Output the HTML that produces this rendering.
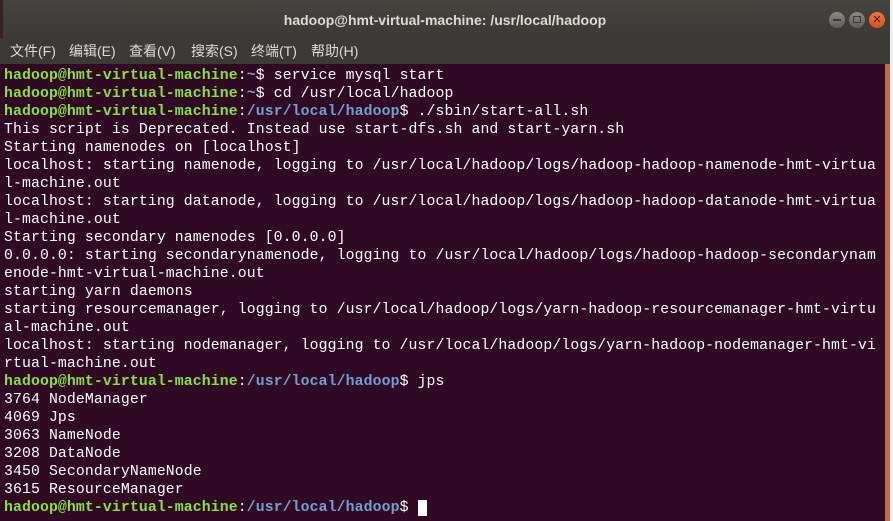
<!DOCTYPE html>
<html><head><meta charset="utf-8"><style>
body{margin:0;width:893px;height:521px;overflow:hidden;background:#f0f0f0;position:relative;font-family:"Liberation Sans","Noto Sans CJK SC",sans-serif}
#title{position:absolute;left:0;top:0;width:890px;height:38px;background:linear-gradient(#45443f,#3b3a36);color:#dfdbd2;font-weight:bold;font-size:14px;text-align:center;line-height:40px}
#menu{position:absolute;left:0;top:38px;width:890px;height:26px;background:#3b3a36;color:#dfdbd2;font-size:14px;line-height:26px}
#menu span{position:absolute;top:0}
.b{position:absolute;top:12px;width:16px;height:16px;border-radius:50%;background:linear-gradient(#8a8984,#5f5e5a)}
#term{position:absolute;left:0;top:64px;width:885px;height:457px;background:#300a24;color:#fff;font-family:"Liberation Mono",monospace;font-size:14.8px;letter-spacing:0.11px;line-height:18px;white-space:pre;padding:3px 0 0 4px;box-sizing:border-box}
.g{color:#8ae234;font-weight:bold}.u{color:#729fcf;font-weight:bold}
#sb{position:absolute;left:885px;top:64px;width:5px;height:457px;background:#d0683e}
#strip{position:absolute;left:0;top:0;width:3px;height:64px;background:#3a2020}
</style></head><body>
<div id="title">hadoop@hmt-virtual-machine: /usr/local/hadoop</div>
<div id="strip"></div>
<div class="b" style="left:829px"><div style="position:absolute;left:4px;top:7px;width:8px;height:2px;background:#3b3a36"></div></div>
<div class="b" style="left:849px"><div style="position:absolute;left:4px;top:4px;width:6px;height:5px;border:1px solid #3b3a36"></div></div>
<div class="b" style="left:869px;background:linear-gradient(#f2743f,#d9501e);color:#3a2010;font-size:11px;line-height:16px;text-align:center">✕</div>
<div id="menu"><span style="left:10px">文件(F)</span><span style="left:69px">编辑(E)</span><span style="left:129px">查看(V)</span><span style="left:191px">搜索(S)</span><span style="left:251px">终端(T)</span><span style="left:311px">帮助(H)</span></div>
<div id="term"><span class="g">hadoop@hmt-virtual-machine</span>:<span class="u">~</span>$ service mysql start
<span class="g">hadoop@hmt-virtual-machine</span>:<span class="u">~</span>$ cd /usr/local/hadoop
<span class="g">hadoop@hmt-virtual-machine</span>:<span class="u">/usr/local/hadoop</span>$ ./sbin/start-all.sh
This script is Deprecated. Instead use start-dfs.sh and start-yarn.sh
Starting namenodes on [localhost]
localhost: starting namenode, logging to /usr/local/hadoop/logs/hadoop-hadoop-namenode-hmt-virtua
l-machine.out
localhost: starting datanode, logging to /usr/local/hadoop/logs/hadoop-hadoop-datanode-hmt-virtua
l-machine.out
Starting secondary namenodes [0.0.0.0]
0.0.0.0: starting secondarynamenode, logging to /usr/local/hadoop/logs/hadoop-hadoop-secondarynam
enode-hmt-virtual-machine.out
starting yarn daemons
starting resourcemanager, logging to /usr/local/hadoop/logs/yarn-hadoop-resourcemanager-hmt-virtu
al-machine.out
localhost: starting nodemanager, logging to /usr/local/hadoop/logs/yarn-hadoop-nodemanager-hmt-vi
rtual-machine.out
<span class="g">hadoop@hmt-virtual-machine</span>:<span class="u">/usr/local/hadoop</span>$ jps
3764 NodeManager
4069 Jps
3063 NameNode
3208 DataNode
3450 SecondaryNameNode
3615 ResourceManager
<span class="g">hadoop@hmt-virtual-machine</span>:<span class="u">/usr/local/hadoop</span>$ <span style="background:#fff"> </span></div>
<div id="sb"></div>
</body></html>
